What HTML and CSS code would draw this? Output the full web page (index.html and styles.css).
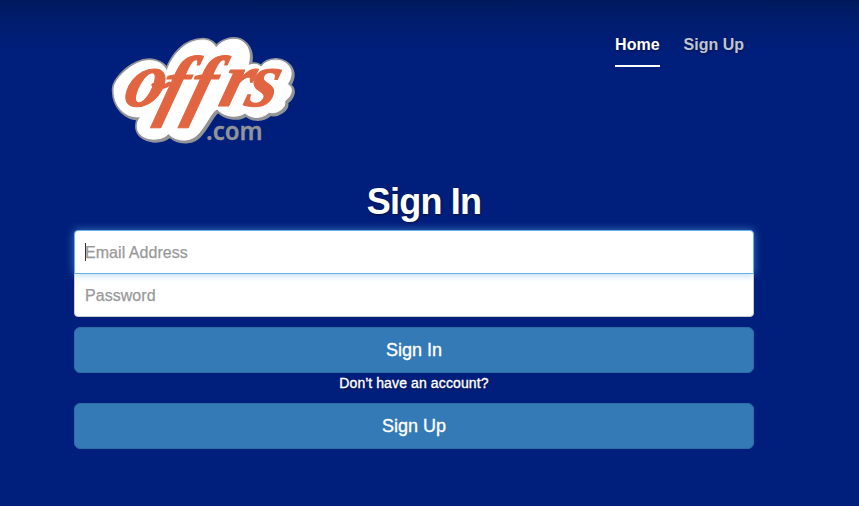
FILE: index.html
```html
<!DOCTYPE html>
<html lang="en">
<head>
<meta charset="utf-8">
<title>Sign In</title>
<link rel="stylesheet" href="styles.css">
</head>
<body>
<header class="masthead">
  <svg class="brand" viewBox="0 0 630 390" role="img" aria-label="offrs.com">
    <defs>
      <path id="cloud" d="M42 190C43 168 75 132 112 115C148 98 190 108 200 139C216 94 252 45 310 45C329 45 344 57 348 69C364 46 397 38 420 46C446 58 454 86 444 122C460 116 474 116 483 127C502 97 560 97 572 135C577 153 568 170 562 177C584 190 573 215 554 228C560 249 529 269 507 262C485 282 455 282 435 264C410 281 371 275 351 252C333 263 324 290 300 320C279 351 233 354 205 326C188 350 118 350 112 310C110 295 115 284 122 275C79 281 39 247 42 190Z"/>
    </defs>
    <use class="brand-edge" href="#cloud"/>
    <use class="brand-edge" href="#cloud" transform="translate(4 4)"/>
    <use class="brand-fill" href="#cloud"/>
    <path class="brand-swash" d="M160 180C176 190 192 188 208 176"/>
    <text class="brand-name" transform="translate(0 244) skewX(-16)" x="64 170 252 350 430" y="0 14 14 0 0">offrs</text>
    <text class="brand-suffix" x="318" y="345" textLength="170" lengthAdjust="spacingAndGlyphs">.com</text>
  </svg>
  <nav class="nav">
    <a class="nav-link active">Home</a>
    <a class="nav-link">Sign Up</a>
  </nav>
</header>
<main class="signin">
  <h1>Sign In</h1>
  <div class="field focused"><span class="caret"></span>Email Address</div>
  <div class="field last">Password</div>
  <button class="btn">Sign In</button>
  <p class="hint">Don't have an account?</p>
  <button class="btn">Sign Up</button>
</main>
</body>
</html>
```
FILE: styles.css
```css
* { box-sizing: border-box; }
html { height: 100%; }
body {
  margin: 0;
  height: 506px;
  overflow: hidden;
  background: #001f7c linear-gradient(#00195c 0, #001c6c 18px, #001f7c 52px) no-repeat;
  color: #fff;
  font-family: "Liberation Sans", Arial, sans-serif;
  text-shadow: 0 1px 3px rgba(0, 0, 0, .5);
}
.masthead {
  display: flex;
  justify-content: space-between;
  align-items: flex-start;
  height: 180px;
  padding: 25px 115px 0 100px;
}
.brand { width: 210px; height: 130px; text-shadow: none; }
.brand-edge { fill: #929497; stroke: #929497; stroke-width: 13; }
.brand-fill { fill: #fff; stroke: #fff; stroke-width: 3; }
.brand-name {
  fill: #e16540;
  stroke: #e16540;
  stroke-width: 3;
  stroke-linejoin: round;
  font: italic bold 236px "Liberation Serif", serif;
}
.brand-swash { fill: none; stroke: #e16540; stroke-width: 12; stroke-linecap: round; }
.brand-suffix { fill: #929497; font: 600 77px "Noto Sans", "Open Sans", sans-serif; stroke: #929497; stroke-width: 1; }
.nav { display: flex; gap: 24px; padding-top: 9px; }
.nav-link {
  height: 33px;
  border-bottom: 2px solid transparent;
  color: rgba(255, 255, 255, .75);
  font-size: 16px;
  font-weight: bold;
  line-height: 21px;
  white-space: nowrap;
}
.nav-link.active { color: #fff; border-color: #fff; }
.signin { width: 680px; margin-left: 74px; }
h1 {
  height: 50px;
  margin: 0;
  padding-left: 20px;
  font-size: 36px;
  line-height: 43px;
  letter-spacing: -.8px;
  text-align: center;
}
.field {
  position: relative;
  height: 44px;
  padding: 0 10px;
  border: 1px solid #ccc;
  background: #fff;
  color: #999;
  font-size: 16px;
  line-height: 43px;
  letter-spacing: .05px;
  text-shadow: none;
  -webkit-text-stroke: .25px #999;
}
.focused {
  z-index: 1;
  border-color: #66afe9;
  border-radius: 4px 4px 0 0;
  box-shadow: 0 0 8px rgba(102, 175, 233, .6);
}
.caret {
  position: absolute;
  left: 10px;
  top: 12px;
  width: 1px;
  height: 18px;
  background: #333;
}
.last { margin: -1px 0 10px; border-radius: 0 0 4px 4px; }
.btn {
  display: block;
  width: 100%;
  height: 46px;
  padding: 0;
  border: 1px solid #2e6da4;
  border-radius: 6px;
  background: #337ab7;
  color: #fff;
  font: 18px/44px "Liberation Sans", Arial, sans-serif;
  text-shadow: none;
  -webkit-text-stroke: .35px #fff;
}
.hint {
  height: 30px;
  margin: 0;
  font-size: 14px;
  line-height: 20px;
  letter-spacing: .12px;
  text-align: center;
  -webkit-text-stroke: .35px #fff;
}
```
